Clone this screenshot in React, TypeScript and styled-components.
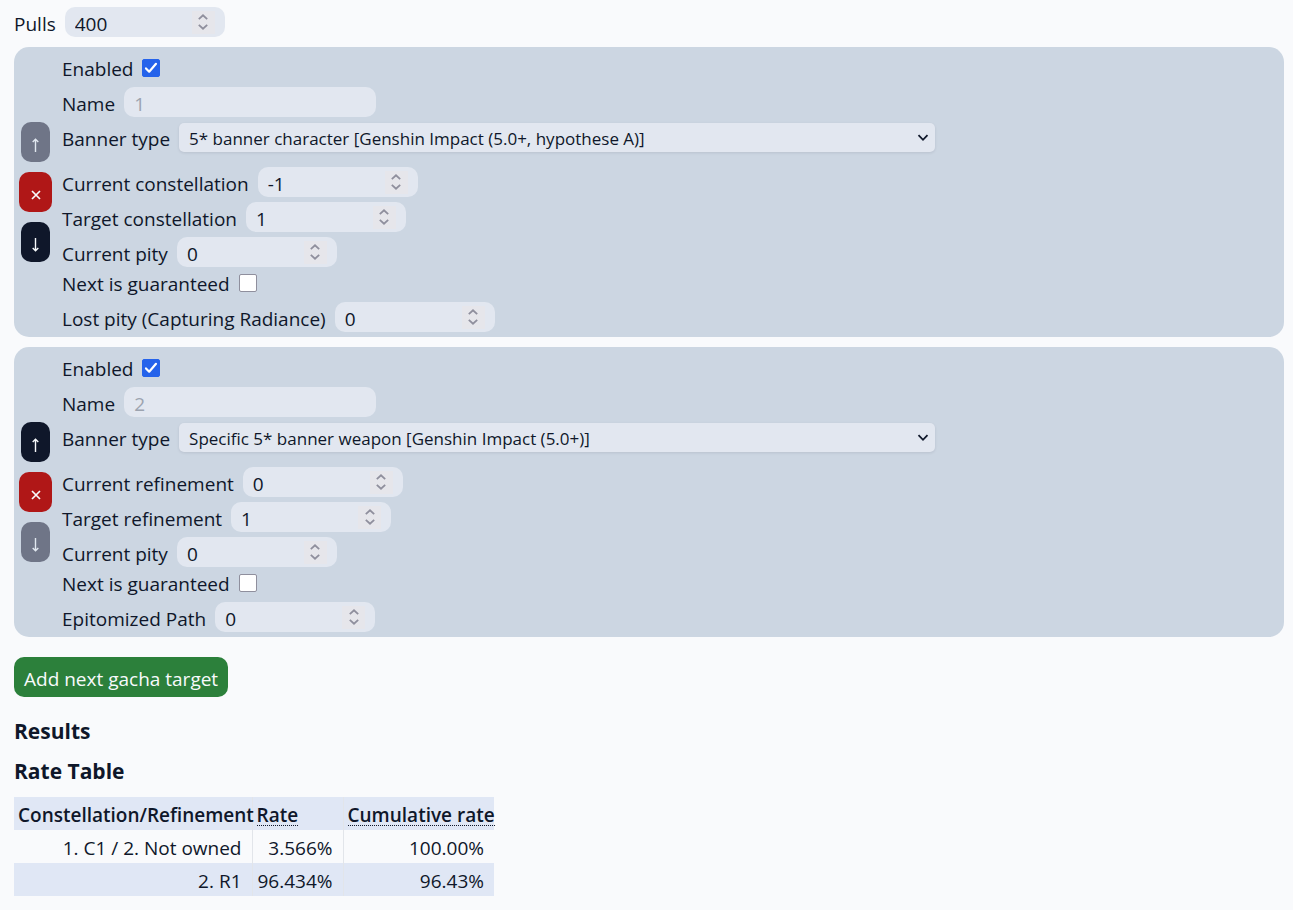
import React, { useId, useState } from "react";
import styled, { createGlobalStyle } from "styled-components";

const GlobalStyle = createGlobalStyle`
  *, *::before, *::after { box-sizing: border-box; }
  body {
    margin: 0;
    background: #f9fafc;
    color: #0f172a;
    font-family: "Segoe UI", "Open Sans", "Noto Sans", sans-serif;
    font-size: 19px;
    line-height: 30px;
  }
  button, input, select { font: inherit; color: inherit; margin: 0; }
`;

const Page = styled.main`
  padding: 7px 9px 10px 14px;
`;

const TargetList = styled.div`
  display: flex;
  flex-direction: column;
  gap: 10px;
  margin: 10px 0 20px;
`;

const TargetCard = styled.section`
  display: flex;
  align-items: center;
  gap: 10px;
  padding: 5px;
  border-radius: 15px;
  background: #ccd6e2;
`;

const Actions = styled.div`
  display: flex;
  flex-direction: column;
  align-items: center;
  gap: 10px;
  width: 33px;
  flex: none;
`;

const tones = { dark: "#0f172a", danger: "#b01717", success: "#2c803b" };

const Button = styled.button<{ $tone: keyof typeof tones }>`
  height: 40px;
  padding: 4px 10px 0;
  border: 0;
  border-radius: 10px;
  background: ${(p) => tones[p.$tone]};
  color: #f8fafc;
  &:disabled { background: #6f7587; color: #e2e8f0; }
`;

const ActionButton = styled(Button)`
  display: flex;
  align-items: center;
  justify-content: center;
  width: ${(p) => (p.$tone === "danger" ? 33 : 29)}px;
  padding: 6px 0 0;
`;

const Fields = styled.div`
  display: flex;
  flex-direction: column;
  flex: 1;
  min-width: 0;
  gap: 5px;
`;

const FieldGroup = styled.div`
  display: flex;
  flex-direction: column;
`;

const Row = styled.div<{ $spaceAfter?: boolean }>`
  display: flex;
  align-items: center;
  gap: 9px;
  height: 30px;
  margin-bottom: ${(p) => (p.$spaceAfter ? 10 : 0)}px;
`;

const Label = styled.label`
  padding-top: 3px;
  white-space: nowrap;
`;

const TextInput = styled.input`
  width: 252px;
  height: 30px;
  padding: 4px 10px 0;
  border: 0;
  border-radius: 10px;
  background: #e2e7f0;
  &::placeholder { color: #9ca3af; opacity: 1; }
`;

const NumberBox = styled.span`
  display: flex;
  align-items: center;
  width: 160px;
  height: 30px;
  padding: 0 10px;
  border-radius: 10px;
  background: #e2e7f0;
`;

const NumberInput = styled.input`
  flex: 1;
  min-width: 0;
  height: 30px;
  padding: 4px 0 0;
  border: 0;
  background: transparent;
  appearance: textfield;
  &::-webkit-inner-spin-button { appearance: none; margin: 0; }
`;

const Stepper = styled.span`
  display: flex;
  flex-direction: column;
  width: 23px;
  height: 23px;
  padding: 1px 0;
  background: #e6e6eb;
`;

const StepButton = styled.button`
  display: flex;
  flex: 1;
  align-items: center;
  justify-content: center;
  min-height: 0;
  padding: 0;
  border: 0;
  background: none;
  color: #8f8f9d;
`;

const Checkbox = styled.input`
  appearance: none;
  display: grid;
  place-items: center;
  width: 18px;
  height: 18px;
  border: 1px solid #8f8f9d;
  border-radius: 2px;
  background: #fff;
  &:checked { border-color: #2563eb; background: #2563eb; }
`;

const CheckWrap = styled.span`
  display: grid;
  place-items: center;
  padding-top: 2px;
  & > * { grid-area: 1 / 1; }
  & > svg { pointer-events: none; }
`;

const SelectWrap = styled.span`
  display: grid;
  align-items: center;
  flex: 0 1 756px;
  & > * { grid-area: 1 / 1; }
  & > svg { justify-self: end; margin: 2px 6px 0 0; pointer-events: none; }
`;

const Select = styled.select`
  appearance: none;
  width: 100%;
  height: 29px;
  padding: 1px 30px 0 10px;
  border: 0;
  border-radius: 5px;
  background: #e2e7f0;
  box-shadow: 0 1px 3px rgba(15, 23, 42, 0.1);
  font-size: 17px;
`;

const Heading = styled.h2`
  margin: 20px 0 0;
  font-size: 21px;
  font-weight: 700;
  line-height: 28px;
  & + & { margin-top: 12px; }
`;

const RateTable = styled.table`
  margin-top: 12px;
  width: 480px;
  table-layout: fixed;
  border-collapse: collapse;

  tr { height: 33px; }
  tr:nth-child(even), thead tr { background: #e0e7f5; }
  th, td { padding: 3px 10px 0; line-height: 29px; text-align: right; white-space: nowrap; }
  th { padding: 4px 0 0 4px; font-weight: 600; text-align: left; }
  td + td { padding-left: 5px; }
  th + th, td + td { border-left: 1px solid #e2e5ea; }
`;

const Column = styled.col<{ $width: number }>`
  width: ${(p) => p.$width}px;
`;

const Hint = styled.abbr`
  display: inline-block;
  line-height: 20px;
  text-decoration: none;
  border-bottom: 1px dotted #0f172a;
`;

function NumberField({ label, initial }: { label: string; initial: number }) {
  const id = useId();
  const [value, setValue] = useState(initial);
  return (
    <Row>
      <Label htmlFor={id}>{label}</Label>
      <NumberBox>
        <NumberInput id={id} type="number" value={value} onChange={(e) => setValue(Number(e.target.value))} />
        <Stepper>
          <StepButton type="button" aria-label={`Increase ${label}`} tabIndex={-1} onClick={() => setValue(value + 1)}>
            <svg width="10" height="6" viewBox="0 0 10 6" fill="none" stroke="currentColor" strokeWidth="1.8">
              <path d="M.8 5.1 5 1.3l4.2 3.8" />
            </svg>
          </StepButton>
          <StepButton type="button" aria-label={`Decrease ${label}`} tabIndex={-1} onClick={() => setValue(value - 1)}>
            <svg width="10" height="6" viewBox="0 0 10 6" fill="none" stroke="currentColor" strokeWidth="1.8">
              <path d="M.8.9 5 4.7 9.2.9" />
            </svg>
          </StepButton>
        </Stepper>
      </NumberBox>
    </Row>
  );
}

function CheckField({ label, initial = false }: { label: string; initial?: boolean }) {
  const id = useId();
  const [checked, setChecked] = useState(initial);
  return (
    <Row>
      <Label htmlFor={id}>{label}</Label>
      <CheckWrap>
        <Checkbox id={id} type="checkbox" checked={checked} onChange={(e) => setChecked(e.target.checked)} />
        {checked && (
          <svg width="18" height="18" viewBox="0 0 18 18" fill="none" stroke="#fff" strokeWidth="2.2" strokeLinecap="round" strokeLinejoin="round">
            <path d="m4 9.4 3.2 3.3 6.8-7.9" />
          </svg>
        )}
      </CheckWrap>
    </Row>
  );
}

function ArrowIcon({ down }: { down?: boolean }) {
  return (
    <svg width="9" height="14" viewBox="0 0 9 14" fill="none" stroke="currentColor" strokeWidth="1.4">
      <path d={down ? "M4.5 0v12.6M1.7 10l2.8 2.8L7.3 10" : "M4.5 14V1.4M1.7 4l2.8-2.8L7.3 4"} />
    </svg>
  );
}

interface Target {
  banner: string;
  current: string;
  currentValue: number;
  target: string;
  extra: string;
}

const targets: Target[] = [
  {
    banner: "5* banner character [Genshin Impact (5.0+, hypothese A)]",
    current: "Current constellation",
    currentValue: -1,
    target: "Target constellation",
    extra: "Lost pity (Capturing Radiance)",
  },
  {
    banner: "Specific 5* banner weapon [Genshin Impact (5.0+)]",
    current: "Current refinement",
    currentValue: 0,
    target: "Target refinement",
    extra: "Epitomized Path",
  },
];

function TargetEditor({ target, index }: { target: Target; index: number }) {
  const id = useId();
  return (
    <TargetCard>
      <Actions>
        <ActionButton type="button" $tone="dark" aria-label="Move up" disabled={index === 0}>
          <ArrowIcon />
        </ActionButton>
        <ActionButton type="button" $tone="danger" aria-label="Remove">
          <svg width="10" height="10" viewBox="0 0 10 10" fill="none" stroke="currentColor" strokeWidth="1.7">
            <path d="m1 1 8 8M9 1 1 9" />
          </svg>
        </ActionButton>
        <ActionButton type="button" $tone="dark" aria-label="Move down" disabled={index === targets.length - 1}>
          <ArrowIcon down />
        </ActionButton>
      </Actions>
      <Fields>
        <CheckField label="Enabled" initial />
        <Row>
          <Label htmlFor={`${id}-name`}>Name</Label>
          <TextInput id={`${id}-name`} type="text" placeholder={String(index + 1)} />
        </Row>
        <Row $spaceAfter>
          <Label htmlFor={`${id}-banner`}>Banner type</Label>
          <SelectWrap>
            <Select id={`${id}-banner`}>
              <option>{target.banner}</option>
            </Select>
            <svg width="12" height="8" viewBox="0 0 12 8" fill="none" stroke="currentColor" strokeWidth="1.8">
              <path d="m1.5 1.2 4.5 4.6 4.5-4.6" />
            </svg>
          </SelectWrap>
        </Row>
        <NumberField label={target.current} initial={target.currentValue} />
        <NumberField label={target.target} initial={1} />
        <FieldGroup>
          <NumberField label="Current pity" initial={0} />
          <CheckField label="Next is guaranteed" />
        </FieldGroup>
        <NumberField label={target.extra} initial={0} />
      </Fields>
    </TargetCard>
  );
}

export default function App() {
  return (
    <>
      <GlobalStyle />
      <Page>
        <NumberField label="Pulls" initial={400} />
        <TargetList>
          {targets.map((target, index) => (
            <TargetEditor key={target.banner} target={target} index={index} />
          ))}
        </TargetList>
        <Button type="button" $tone="success">Add next gacha target</Button>
        <Heading>Results</Heading>
        <Heading>Rate Table</Heading>
        <RateTable>
          <colgroup>
            <Column $width={238} />
            <Column $width={91} />
            <Column $width={151} />
          </colgroup>
          <thead>
            <tr>
              <th scope="col">Constellation/Refinement</th>
              <th scope="col"><Hint>Rate</Hint></th>
              <th scope="col"><Hint>Cumulative rate</Hint></th>
            </tr>
          </thead>
          <tbody>
            <tr><td>1. C1 / 2. Not owned</td><td>3.566%</td><td>100.00%</td></tr>
            <tr><td>2. R1</td><td>96.434%</td><td>96.43%</td></tr>
          </tbody>
        </RateTable>
      </Page>
    </>
  );
}
